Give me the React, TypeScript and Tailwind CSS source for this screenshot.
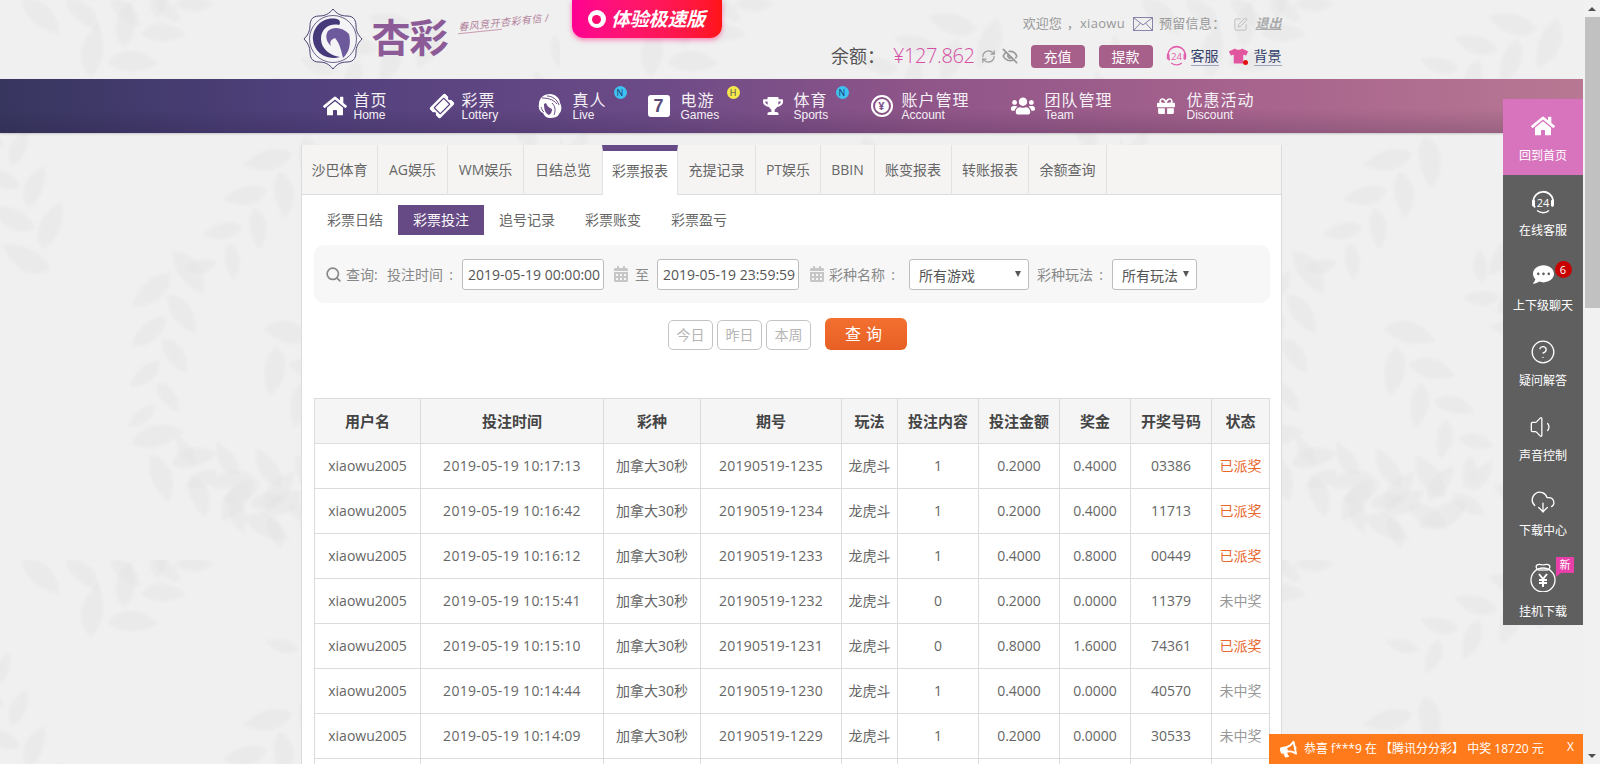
import { CircleHelp, CloudDownload, EyeOff, RefreshCw, Search, SquarePen, Volume1 } from "lucide-react";
import type { ReactNode } from "react";
import { FaBullhorn, FaCalendarAlt, FaCommentDots, FaGift, FaHome, FaTicketAlt, FaTrophy, FaTshirt, FaUsers } from "react-icons/fa";

const sans = "font-['Open_Sans','Noto_Sans_CJK_SC',sans-serif]";

// foliage sprigs for the page background: a fixed sequence, so the tile never changes
const sprigs = Array.from({ length: 13 }, (_, i) => ({
  x: (i * 173) % 560,
  y: (i * 251) % 560,
  r: (i * 97) % 360,
}));

const LeafTexture = () => (
  <svg className="absolute inset-0 w-full h-full pointer-events-none" aria-hidden="true">
    <defs>
      <filter id="soft">
        <feGaussianBlur stdDeviation="1.5" />
      </filter>
      <pattern id="leafTile" width="560" height="560" patternUnits="userSpaceOnUse">
        <g filter="url(#soft)" fill="#e2e2e4" fillOpacity="0.42">
          {sprigs.map((s, i) => (
            <g key={i} transform={`translate(${s.x} ${s.y}) rotate(${s.r}) scale(1.3)`}>
              {[0, 1, 2, 3, 4, 5, 6, 7].map((n) => (
                <path
                  key={n}
                  d="M0 0C7-11 23-12 36 0C23 8 8 8 0 0Z"
                  transform={`translate(${n * 17} 0) rotate(${n % 2 === 0 ? -42 : 42}) scale(${1.15 - n * 0.06})`}
                />
              ))}
            </g>
          ))}
        </g>
      </pattern>
    </defs>
    <rect width="100%" height="100%" fill="url(#leafTile)" />
  </svg>
);

const Logo = () => (
  <svg viewBox="0 0 60 62" className="w-[60px] h-[62px] shrink-0">
    <path
      d="M30 1C34 6 38 8 44 8C52 8 53 14 53 18C53 23 55 27 59 31C55 35 53 39 53 44C53 48 52 54 44 54C38 54 34 56 30 61C26 56 22 54 16 54C8 54 7 48 7 44C7 39 5 35 1 31C5 27 7 23 7 18C7 14 8 8 16 8C22 8 26 6 30 1Z"
      fill="#f4f3f6"
      stroke="#4b4170"
      strokeWidth="1"
    />
    <circle cx="30" cy="31" r="23.5" fill="none" stroke="#4b4170" strokeWidth="0.8" />
    <path d="M34 11C20 8 9 19 10 32C11 44 23 53 37 49C28 48 18 41 18 31C18 21 26 15 36 17C38 15 37 12 34 11Z" fill="#46397a" />
    <path d="M25 23C30 18 40 19 46 26C48 34 47 44 40 50C38 42 37 36 32 30C29 31 26 33 28 38C23 34 22 27 25 23Z" fill="#6c5a9c" />
  </svg>
);

const WomanIcon = () => (
  <svg viewBox="0 0 26 26" className="w-[26px] h-[26px]">
    <path d="M13 1C7 1 2 5 2 11C1 15 3 19 6 20C7 23 10 25 13 25C17 25 21 24 22 21C25 18 25 13 23 10C23 5 18 1 13 1Z" fill="#fff" />
    <path d="M7 11C7 16 8 20 12 22C14 21 15 19 15 16C12 15 10 13 9 10Z" fill="#6a4a87" />
    <path d="M5 5C10 5 16 6 20 11M10 3C15 3 20 6 22 12M15 10C18 13 19 17 17 22M4 14C5 16 5 18 7 19" fill="none" stroke="#6a4a87" strokeWidth="1" />
  </svg>
);

const YenBadge = () => (
  <span className="w-[22px] h-[22px] rounded-full border-2 border-white flex items-center justify-center">
    <span className="w-[14px] h-[14px] rounded-full bg-white text-[#7b5089] text-[11px] leading-[14px] font-bold text-center">¥</span>
  </span>
);

// "24" in a headset ring: pink in the top bar, white in the side rail
const Headset24 = ({ color, size }: { color: string; size: string }) => (
  <svg viewBox="0 0 24 24" className={size} fill="none" stroke={color}>
    <path d="M4 17A10 10 0 1 1 21 16" strokeWidth="1.8" />
    <path d="M6 20C10 23 15 23 18 20" strokeWidth="1.4" />
    <rect x="1" y="9" width="3" height="7" rx="1.5" fill={color} stroke="none" />
    <rect x="20" y="9" width="3" height="7" rx="1.5" fill={color} stroke="none" />
    <text x="12" y="16" textAnchor="middle" fontSize="11" fill={color} stroke="none">24</text>
  </svg>
);

const navItems: { cn: string; en: string; w: string; iconW: string; icon: ReactNode; badge?: ReactNode }[] = [
  { cn: "首页", en: "Home", w: "w-[108px]", iconW: "w-[31px]", icon: <FaHome className="w-[24px] h-[22px] text-white" /> },
  { cn: "彩票", en: "Lottery", w: "w-[106px]", iconW: "w-[31px]", icon: <FaTicketAlt className="w-[22px] h-[22px] text-white -rotate-45" /> },
  {
    cn: "真人", en: "Live", w: "w-[111px]", iconW: "w-[36px]", icon: <WomanIcon />,
    badge: <span className="absolute left-[77px] top-[7px] w-[13px] h-[13px] rounded-full bg-[#3fc1ee] text-[#1d3a7a] text-[9px] leading-[13px] text-center">N</span>,
  },
  {
    cn: "电游", en: "Games", w: "w-[115px]", iconW: "w-[33px]",
    icon: <span className="w-[22px] h-[22px] rounded-[3px] bg-white text-[#5a4a78] text-[18px] leading-[22px] font-bold text-center font-['Liberation_Sans',sans-serif]">7</span>,
    badge: <span className="absolute left-[79px] top-[7px] w-[13px] h-[13px] rounded-full bg-[#f6e84a] text-[#4a3a60] text-[9px] leading-[13px] text-center">H</span>,
  },
  {
    cn: "体育", en: "Sports", w: "w-[108px]", iconW: "w-[31px]", icon: <FaTrophy className="w-[20px] h-[20px] text-white" />,
    badge: <span className="absolute left-[73px] top-[7px] w-[13px] h-[13px] rounded-full bg-[#3fc1ee] text-[#1d3a7a] text-[9px] leading-[13px] text-center">N</span>,
  },
  { cn: "账户管理", en: "Account", w: "w-[140px]", iconW: "w-[31px]", icon: <YenBadge /> },
  { cn: "团队管理", en: "Team", w: "w-[146px]", iconW: "w-[34px]", icon: <FaUsers className="w-[24px] h-[22px] text-white" /> },
  { cn: "优惠活动", en: "Discount", w: "w-[120px]", iconW: "w-[30px]", icon: <FaGift className="w-[18px] h-[20px] text-white" /> },
];

const reportTabs = [
  { name: "沙巴体育", w: "w-[76px]" },
  { name: "AG娱乐", w: "w-[70px]" },
  { name: "WM娱乐", w: "w-[76px]" },
  { name: "日结总览", w: "w-[79px]" },
  { name: "彩票报表", w: "w-[76px]", active: true },
  { name: "充提记录", w: "w-[78px]" },
  { name: "PT娱乐", w: "w-[65px]" },
  { name: "BBIN", w: "w-[54px]" },
  { name: "账变报表", w: "w-[77px]" },
  { name: "转账报表", w: "w-[77px]" },
  { name: "余额查询", w: "w-[78px]" },
];

const subTabs = ["彩票日结", "彩票投注", "追号记录", "彩票账变", "彩票盈亏"];

const columns = [
  { name: "用户名", w: "w-[106px]" },
  { name: "投注时间", w: "w-[183px]" },
  { name: "彩种", w: "w-[97px]" },
  { name: "期号", w: "w-[141px]" },
  { name: "玩法", w: "w-[56px]" },
  { name: "投注内容", w: "w-[81px]" },
  { name: "投注金额", w: "w-[81px]" },
  { name: "奖金", w: "w-[71px]" },
  { name: "开奖号码", w: "w-[81px]" },
  { name: "状态", w: "w-[58px]" },
];

const rows = [
  ["2019-05-19 10:17:13", "20190519-1235", "1", "0.2000", "0.4000", "03386", "已派奖"],
  ["2019-05-19 10:16:42", "20190519-1234", "1", "0.2000", "0.4000", "11713", "已派奖"],
  ["2019-05-19 10:16:12", "20190519-1233", "1", "0.4000", "0.8000", "00449", "已派奖"],
  ["2019-05-19 10:15:41", "20190519-1232", "0", "0.2000", "0.0000", "11379", "未中奖"],
  ["2019-05-19 10:15:10", "20190519-1231", "0", "0.8000", "1.6000", "74361", "已派奖"],
  ["2019-05-19 10:14:44", "20190519-1230", "1", "0.4000", "0.0000", "40570", "未中奖"],
  ["2019-05-19 10:14:09", "20190519-1229", "1", "0.2000", "0.0000", "30533", "未中奖"],
];

const Rail = ({ label, icon, active, labelClass = "mt-[3px]" }: { label: string; icon: ReactNode; active?: boolean; labelClass?: string }) => (
  <div className={`relative flex flex-col items-center text-white text-[12px] leading-[16px] ${active ? "h-[76px] bg-[#d874bd] justify-end pb-[11px]" : "h-[75px] justify-start pt-[9px]"}`}>
    <div className="h-[36px] flex items-center justify-center">{icon}</div>
    <div className={active ? "mt-[4px]" : labelClass}>{label}</div>
  </div>
);

const Label = ({ text, w }: { text: string; w: string }) => (
  <span className={`${w} flex justify-between pr-[4px]`}>
    <span>{text}</span>
    <span>:</span>
  </span>
);

const DateBox = ({ value }: { value: string }) => (
  <div className="w-[142px] h-[31px] bg-white border border-[#bdbdbd] rounded-[3px] pl-[5px] text-[14px] leading-[29px] text-[#555] whitespace-nowrap overflow-hidden">
    {value}
  </div>
);

const SelectBox = ({ value, w }: { value: string; w: string }) => (
  <div className={`${w} h-[31px] bg-white border border-[#bdbdbd] rounded-[3px] pl-[9px] pr-[7px] flex items-center justify-between text-[14px] text-[#555]`}>
    <span className="pt-[2px]">{value}</span>
    <span className="w-0 h-0 border-x-[3.5px] border-x-transparent border-t-[6px] border-t-[#555]" />
  </div>
);

const App = () => {
  return (
    <div className={`w-full h-screen flex overflow-hidden bg-[#f0f0f0] ${sans}`}>
      <div className="relative flex-1 min-w-0 overflow-hidden">
        <LeafTexture />

        <div className="relative">
          {/* top bar */}
          <div className="w-[980px] h-[79px] mx-auto flex">
            <div className="w-[270px] pl-px pt-[8px] flex shrink-0">
              <Logo />
              <span className="ml-[9px] mt-[7px] h-[44px] text-[39px] leading-[44px] font-bold text-[#8c5a97] tracking-[-1px] shrink-0">杏彩</span>
              <div className="ml-[10px] mt-[8px] text-[#b07f9b]">
                <div className="text-[10px] leading-[12px] italic -rotate-[6deg] whitespace-nowrap tracking-[0.5px]">春风竞开杏彩有信 /</div>
                <div className="w-[44px] h-px mt-[3px] bg-[#c99bb3] -rotate-[6deg]" />
              </div>
            </div>
            <div className="w-[150px] h-[38px] rounded-b-[12px] bg-gradient-to-r from-[#ff0092] to-[#ff1414] shadow-[0_2px_5px_rgba(255,40,130,0.55)] flex items-center justify-center gap-[5px] text-white shrink-0">
              <span className="w-[18px] h-[18px] rounded-full bg-white flex items-center justify-center">
                <span className="w-[9px] h-[9px] rounded-full bg-[#ff0a70]" />
              </span>
              <span className="text-[19px] leading-[24px] font-bold italic tracking-[-0.2px]">体验极速版</span>
            </div>
            <div className="flex-1 flex flex-col items-end pt-[15px] min-w-0">
              <div className="h-[18px] flex items-center text-[13px] text-[#999] whitespace-nowrap">
                <span>欢迎您</span>
                <span className="ml-[5px] tracking-[0.3px]">，xiaowu</span>
                <svg viewBox="0 0 20 14" className="w-[20px] h-[14px] ml-[8px]" fill="none" stroke="#8a82a8" strokeWidth="1">
                  <rect x="0.5" y="0.5" width="19" height="13" />
                  <path d="M1 1L10 8L19 1M1 13L7.5 6M19 13L12.5 6" />
                </svg>
                <span className="ml-[6px] tracking-[0.3px]">预留信息：</span>
                <SquarePen className="w-[15px] h-[15px] ml-[8px] text-[#bbb]" strokeWidth={1.5} />
                <span className="ml-[7px] font-bold italic underline text-[#aaa]">退出</span>
              </div>
              <div className="h-[24px] mt-[11px] flex items-center whitespace-nowrap">
                <span className="text-[18px] text-[#555]">余额：</span>
                <span className="ml-[8px] text-[20px] leading-[24px] text-[#d44fa3] tracking-[-0.4px] font-light">¥127.862</span>
                <RefreshCw className="w-[15px] h-[15px] ml-[6px] text-[#999]" />
                <EyeOff className="w-[16px] h-[16px] ml-[6px] text-[#999]" strokeWidth={2.5} />
                <span className="w-[54px] h-[23px] ml-[13px] rounded-[4px] bg-[#a7608a] text-white text-[14px] leading-[23px] text-center">充值</span>
                <span className="w-[54px] h-[23px] ml-[14px] rounded-[4px] bg-[#a7608a] text-white text-[14px] leading-[23px] text-center">提款</span>
                <span className="ml-[13px]"><Headset24 color="#e260ad" size="w-[21px] h-[22px]" /></span>
                <span className="ml-[4px] text-[14px] leading-[18px] text-[#33406a] border-b border-[#9fa6bb]">客服</span>
                <span className="relative ml-[10px] w-[19px] h-[18px]">
                  <FaTshirt className="w-[19px] h-[18px] text-[#e2559f]" />
                  <span className="absolute right-0 bottom-0 w-[5px] h-[5px] rounded-full bg-[#e01010]" />
                </span>
                <span className="ml-[6px] text-[14px] leading-[18px] text-[#33406a] border-b border-[#9fa6bb]">背景</span>
              </div>
            </div>
          </div>

          {/* main nav */}
          <div className="h-[54px] bg-[linear-gradient(to_bottom,rgba(30,20,50,0)_55%,rgba(30,20,50,0.18)_100%),linear-gradient(to_right,#37365f_0%,#50407c_19%,#6a4a87_40%,#8f5589_58%,#a8648d_80%,#b87893_100%)] shadow-[0_1px_2px_rgba(0,0,0,0.18)]">
            <div className="w-[980px] h-full mx-auto pl-[21px] flex">
              {navItems.map((item) => (
                <div key={item.en} className={`relative ${item.w} h-full flex items-center shrink-0`}>
                  <div className={`${item.iconW} flex items-center shrink-0`}>{item.icon}</div>
                  <div className="pt-[2px] text-[#f5f0f6] whitespace-nowrap">
                    <div className="text-[16px] leading-[17px] tracking-[1px]">{item.cn}</div>
                    <div className="text-[12px] leading-[13px] font-['Liberation_Sans',sans-serif]">{item.en}</div>
                  </div>
                  {item.badge}
                </div>
              ))}
            </div>
          </div>

          {/* report card */}
          <div className="w-[981px] mx-auto mt-[12px] bg-white border-x border-[#dcdcdc]">
            <div className="h-[50px] flex bg-[#f5f4f3] border-b border-[#dcdcdc]">
              {reportTabs.map((tab) => (
                <div
                  key={tab.name}
                  className={`${tab.w} h-[50px] flex items-center justify-center text-[14px] text-[#666] whitespace-nowrap border-r border-[#e2e2e2] ${
                    tab.active ? "bg-white border-t-[6px] border-t-[#664a86] border-l border-l-[#e2e2e2] pb-[6px] -ml-px" : "pb-px"
                  }`}
                >
                  {tab.name}
                </div>
              ))}
            </div>

            <div className="flex mt-[10px] pl-[10px]">
              {subTabs.map((tab) => (
                <div
                  key={tab}
                  className={`w-[86px] h-[30px] text-[14px] leading-[30px] text-center ${tab === "彩票投注" ? "bg-[#664a86] text-white" : "text-[#666]"}`}
                >
                  {tab}
                </div>
              ))}
            </div>

            <div className="ml-[12px] mr-[11px] mt-[10px] h-[58px] rounded-[10px] bg-[#f7f7f7] pl-[11px] flex items-center text-[14px] text-[#888] whitespace-nowrap">
              <Search className="w-[17px] h-[17px] text-[#888] shrink-0" strokeWidth={2.4} />
              <span className="ml-[4px] w-[32px]">查询:</span>
              <span className="ml-[9px]"><Label text="投注时间" w="w-[70px]" /></span>
              <div className="ml-[5px]"><DateBox value="2019-05-19 00:00:00" /></div>
              <FaCalendarAlt className="ml-[9px] w-[16px] h-[16px] text-[#c6c6c6] shrink-0" />
              <span className="ml-[6px] w-[14px]">至</span>
              <div className="ml-[8px]"><DateBox value="2019-05-19 23:59:59" /></div>
              <FaCalendarAlt className="ml-[10px] w-[16px] h-[16px] text-[#c6c6c6] shrink-0" />
              <span className="ml-[4px]"><Label text="彩种名称" w="w-[70px]" /></span>
              <div className="ml-[10px]"><SelectBox value="所有游戏" w="w-[120px]" /></div>
              <span className="ml-[8px]"><Label text="彩种玩法" w="w-[70px]" /></span>
              <div className="ml-[5px]"><SelectBox value="所有玩法" w="w-[85px]" /></div>
            </div>

            <div className="mt-[15px] pl-[366px] flex items-end">
              {["今日", "昨日", "本周"].map((label) => (
                <div key={label} className="w-[45px] h-[30px] mr-[4px] rounded-[5px] border border-[#c4c4c4] text-[14px] leading-[28px] text-center text-[#b5b5b5]">
                  {label}
                </div>
              ))}
              <div className="w-[82px] h-[32px] ml-[10px] rounded-[6px] bg-gradient-to-b from-[#f3702f] to-[#e75f25] text-white text-[16px] leading-[32px] text-center tracking-[5px]">
                查询
              </div>
            </div>

            <table className="ml-[12px] mt-[48px] w-[955px] table-fixed border-collapse text-[14px] text-[#666]">
              <thead>
                <tr className="h-[45px] bg-[#f5f5f5]">
                  {columns.map((c) => (
                    <th key={c.name} className={`${c.w} border border-[#dcdcdc] text-[15px] font-bold text-[#444] whitespace-nowrap`}>{c.name}</th>
                  ))}
                </tr>
              </thead>
              <tbody>
                {rows.map((r) => (
                  <tr key={r[1]} className="h-[45px] text-center">
                    <td className="border border-[#dcdcdc] pb-[2px]">xiaowu2005</td>
                    <td className="border border-[#dcdcdc] pb-[2px] tracking-[0.3px]">{r[0]}</td>
                    <td className="border border-[#dcdcdc] pb-[2px]">加拿大30秒</td>
                    <td className="border border-[#dcdcdc] pb-[2px] tracking-[0.25px]">{r[1]}</td>
                    <td className="border border-[#dcdcdc] pb-[2px]">龙虎斗</td>
                    <td className="border border-[#dcdcdc] pb-[2px]">{r[2]}</td>
                    <td className="border border-[#dcdcdc] pb-[2px]">{r[3]}</td>
                    <td className="border border-[#dcdcdc] pb-[2px]">{r[4]}</td>
                    <td className="border border-[#dcdcdc] pb-[2px]">{r[5]}</td>
                    <td className={`border border-[#dcdcdc] pb-[2px] whitespace-nowrap ${r[6] === "已派奖" ? "text-[#e8672c]" : "text-[#999]"}`}>{r[6]}</td>
                  </tr>
                ))}
                <tr className="h-[45px]">
                  {columns.map((c) => (
                    <td key={c.name} className="border border-[#dcdcdc]" />
                  ))}
                </tr>
              </tbody>
            </table>
            <div className="h-[40px]" />
          </div>
        </div>

        {/* floating side rail */}
        <div className="absolute right-0 top-[99px] w-[80px] bg-[#5f5f5f]">
          <Rail active label="回到首页" icon={<FaHome className="w-[24px] h-[24px] text-white" />} />
          <Rail label="在线客服" icon={<Headset24 color="#ffffff" size="w-[24px] h-[25px]" />} />
          <Rail
            label="上下级聊天"
            icon={
              <span className="relative -mt-[5px]">
                <FaCommentDots className="w-[23px] h-[21px] text-white" />
                <span className="absolute left-[23px] -top-[3px] w-[17px] h-[17px] rounded-full bg-[#c90000] text-white text-[11px] leading-[17px] text-center">6</span>
              </span>
            }
          />
          <Rail label="疑问解答" icon={<CircleHelp className="w-[26px] h-[26px] text-white" strokeWidth={1.2} />} />
          <Rail label="声音控制" icon={<Volume1 className="w-[28px] h-[28px] text-white" strokeWidth={1.1} />} />
          <Rail label="下载中心" icon={<CloudDownload className="w-[26px] h-[26px] text-white" strokeWidth={1.2} />} />
          <Rail
            label="挂机下载"
            labelClass="mt-[9px]"
            icon={
              <span className="relative">
                <svg viewBox="0 0 28 30" className="w-[28px] h-[30px]" fill="none" stroke="#fff" strokeWidth="1.3">
                  <path d="M9 8C5 4 8 1 14 3C20 1 23 4 19 8" />
                  <path d="M9 8H19" />
                  <circle cx="14" cy="18" r="12" />
                  <path d="M10 12L14 17L18 12M14 17V25M10 18H18M10 21H18" strokeWidth="2" />
                </svg>
                <span className="absolute left-[27px] -top-[5px] w-[18px] h-[16px] bg-[#e83fa8] text-white text-[11px] leading-[16px] text-center">新</span>
                <span className="absolute left-[27px] top-[11px] w-0 h-0 border-r-[5px] border-r-transparent border-t-[4px] border-t-[#e83fa8]" />
              </span>
            }
          />
        </div>

        {/* win toast */}
        <div className="absolute right-0 bottom-0 w-[314px] h-[30px] bg-[#ff7a1a] flex items-center pl-[11px] text-white text-[12px] whitespace-nowrap">
          <FaBullhorn className="w-[17px] h-[15px] -rotate-12 shrink-0" />
          <span className="ml-[7px]">恭喜 f***9 在 【腾讯分分彩】 中奖 18720 元</span>
          <span className="absolute right-[9px] top-[4px]">X</span>
        </div>
      </div>

      {/* page scrollbar */}
      <div className="w-[17px] h-full bg-[#f1f1f1] flex flex-col shrink-0">
        <div className="h-[17px] flex items-center justify-center">
          <span className="w-0 h-0 border-x-[4px] border-x-transparent border-b-[4px] border-b-[#505050]" />
        </div>
        <div className="h-[291px] ml-[2px] bg-[#c1c1c1]" />
        <div className="flex-1" />
        <div className="h-[17px] flex items-center justify-center">
          <span className="w-0 h-0 border-x-[4px] border-x-transparent border-t-[4px] border-t-[#505050]" />
        </div>
      </div>
    </div>
  );
};

export default App;
